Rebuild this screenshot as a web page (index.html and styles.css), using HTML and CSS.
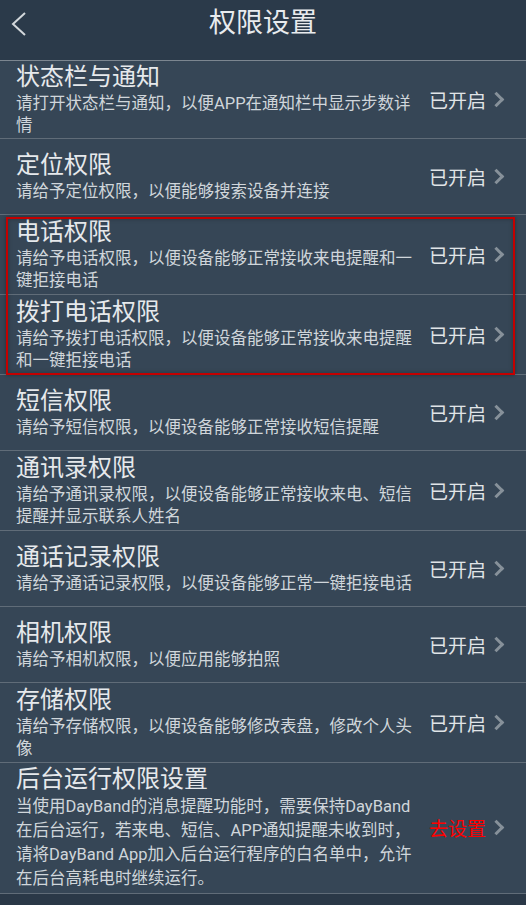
FILE: index.html
```html
<!DOCTYPE html>
<html lang="zh-CN">
<head>
	<meta charset="utf-8">
	<title>权限设置</title>
	<meta name="viewport" content="width=device-width, initial-scale=1">
	<link rel="stylesheet" href="styles.css">
</head>
<body>
	<div class="page">
		<div class="topbar">
			<a class="back" href="#">
				<svg width="16" height="26" viewBox="0 0 16 26"><polyline points="14,2 2,13 14,24" fill="none" stroke="#d3d8dc" stroke-width="2"/></svg>
			</a>
			<h1 class="title">权限设置</h1>
		</div>

		<div class="list">
			<div class="item">
				<div class="info">
					<div class="name">状态栏与通知</div>
					<div class="desc">请打开状态栏与通知，以便APP在通知栏中显示步数详情</div>
				</div>
				<div class="state">已开启<i class="arrow"></i></div>
			</div>
			<div class="item">
				<div class="info">
					<div class="name">定位权限</div>
					<div class="desc">请给予定位权限，以便能够搜索设备并连接</div>
				</div>
				<div class="state">已开启<i class="arrow"></i></div>
			</div>
			<div class="mark">
				<div class="item tall">
					<div class="info">
						<div class="name">电话权限</div>
						<div class="desc">请给予电话权限，以便设备能够正常接收来电提醒和一键拒接电话</div>
					</div>
					<div class="state">已开启<i class="arrow"></i></div>
				</div>
				<div class="item tall">
					<div class="info">
						<div class="name">拨打电话权限</div>
						<div class="desc">请给予拨打电话权限，以便设备能够正常接收来电提醒和一键拒接电话</div>
					</div>
					<div class="state">已开启<i class="arrow"></i></div>
				</div>
			</div>
			<div class="item">
				<div class="info">
					<div class="name">短信权限</div>
					<div class="desc">请给予短信权限，以便设备能够正常接收短信提醒</div>
				</div>
				<div class="state">已开启<i class="arrow"></i></div>
			</div>
			<div class="item tall">
				<div class="info">
					<div class="name">通讯录权限</div>
					<div class="desc">请给予通讯录权限，以便设备能够正常接收来电、短信提醒并显示联系人姓名</div>
				</div>
				<div class="state">已开启<i class="arrow"></i></div>
			</div>
			<div class="item">
				<div class="info">
					<div class="name">通话记录权限</div>
					<div class="desc">请给予通话记录权限，以便设备能够正常一键拒接电话</div>
				</div>
				<div class="state">已开启<i class="arrow"></i></div>
			</div>
			<div class="item">
				<div class="info">
					<div class="name">相机权限</div>
					<div class="desc">请给予相机权限，以便应用能够拍照</div>
				</div>
				<div class="state">已开启<i class="arrow"></i></div>
			</div>
			<div class="item tall">
				<div class="info">
					<div class="name">存储权限</div>
					<div class="desc">请给予存储权限，以便设备能够修改表盘，修改个人头像</div>
				</div>
				<div class="state">已开启<i class="arrow"></i></div>
			</div>
			<div class="item long">
				<div class="info">
					<div class="name">后台运行权限设置</div>
					<div class="desc">当使用DayBand的消息提醒功能时，需要保持DayBand在后台运行，若来电、短信、APP通知提醒未收到时，请将DayBand App加入后台运行程序的白名单中，允许在后台高耗电时继续运行。</div>
				</div>
				<div class="state go">去设置<i class="arrow"></i></div>
			</div>
		</div>
	</div>
</body>
</html>
```

FILE: styles.css
```css
*{ margin:0; padding:0; box-sizing:border-box; }
body{ background:#2a3847; font-family:Roboto,"Noto Sans CJK SC",sans-serif; color:#e6e9ec; }
.page{ width:526px; }

.topbar{ height:61px; background:#2b3a4a; border-bottom:1px solid #7c8690; display:flex; align-items:flex-start; position:relative; }
.topbar .back{ display:block; padding:11px 0 0 11px; }
.topbar .title{ position:absolute; left:0; right:0; top:7px; text-align:center; font-size:27px; line-height:32px; font-weight:normal; color:#e8ebee; pointer-events:none; }

.list{ background:#364656; }
.item{ min-height:76px; display:flex; align-items:center; padding:1px 20px 2px 16px; border-bottom:1px solid #606c78; }
.item.tall{ min-height:80px; }
.info{ flex:0 0 405px; }
.name{ font-size:24px; line-height:30px; color:#e6e9ec; }
.desc{ font-size:16.5px; line-height:21.5px; color:#d0d6db; margin-top:1px; }
.long .desc{ line-height:24px; }

.state{ flex:1; display:flex; align-items:center; justify-content:flex-end; font-size:19px; color:#e0e4e7; white-space:nowrap; }
.state.go{ color:#f00; }
.arrow{ display:block; width:11px; height:11px; margin:0 4px 0 5px; border-top:3.5px solid #87919a; border-right:3.5px solid #87919a; transform:rotate(45deg); }

.mark{ position:relative; }
.mark::after{ content:""; position:absolute; top:2px; left:6px; right:11px; bottom:0; border:2px solid #c40000; box-shadow:0 0 4px rgba(0,0,0,.35), inset 0 0 4px rgba(0,0,0,.25); }
```
